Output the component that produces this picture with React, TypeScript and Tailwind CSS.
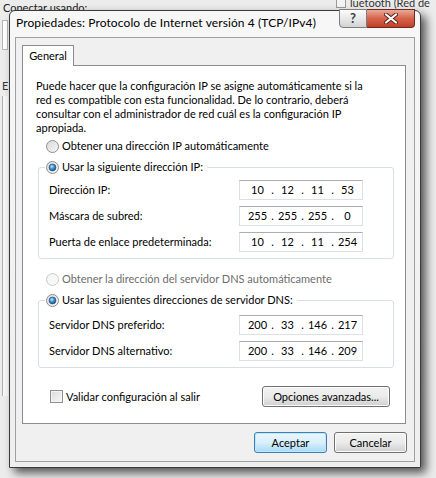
import React, { useId } from 'react';

const Radio = ({ checked, disabled }: { checked?: boolean; disabled?: boolean }) => {
  const id = useId().replace(/:/g, '');
  return (
    <svg width="13" height="13" viewBox="0 0 13 13" className="shrink-0">
      <defs>
        <linearGradient id={`bg${id}`} x1="0" y1="0" x2="1" y2="1">
          <stop offset="0" stopColor={disabled ? '#f4f4f4' : '#d9d9d9'} />
          <stop offset="1" stopColor={disabled ? '#fafafa' : '#f7f7f7'} />
        </linearGradient>
        <radialGradient id={`dot${id}`} cx="0.4" cy="0.35" r="0.7">
          <stop offset="0" stopColor="#bfe6fb" />
          <stop offset="0.5" stopColor="#3c8fd0" />
          <stop offset="1" stopColor="#16508a" />
        </radialGradient>
      </defs>
      <circle cx="6.5" cy="6.5" r="6" fill={`url(#bg${id})`} stroke={disabled ? '#c9c9c9' : '#8c8f93'} />
      {checked && <circle cx="6.5" cy="6.5" r="3.4" fill={`url(#dot${id})`} stroke="#1f4f7e" strokeWidth="0.7" />}
    </svg>
  );
};

const IpBox = ({ parts }: { parts: string[] }) => (
  <div className="flex h-[20px] w-[124px] items-center border border-[#dbdfe6] border-t-[#abadb3] bg-white pl-[5px] leading-[14px]">
    {parts.map((p, i) => (
      <React.Fragment key={i}>
        {i > 0 && <span className="w-[5px] text-center">.</span>}
        <span className="w-[25px] text-center">{p}</span>
      </React.Fragment>
    ))}
  </div>
);

const Row = ({ label, parts }: { label: string; parts: string[] }) => (
  <div className="flex items-center">
    <span className="w-[190px] leading-[14px]">{label}</span>
    <IpBox parts={parts} />
  </div>
);

const WinButton = ({ children, isDefault, className = '' }: { children: React.ReactNode; isDefault?: boolean; className?: string }) => (
  <button
    className={`flex h-[21px] items-center justify-center rounded-[3px] border leading-[14px] ${
      isDefault
        ? 'border-[#3c7fb1] bg-gradient-to-b from-[#eaf6fd] via-[#d9f0fc] to-[#a7d9f5] shadow-[inset_0_0_0_1px_#c0e6fa]'
        : 'border-[#707070] bg-gradient-to-b from-[#f2f2f2] via-[#ebebeb] to-[#cfcfcf] shadow-[inset_0_0_0_1px_#fcfcfc]'
    } ${className}`}
  >
    {children}
  </button>
);

export default function App() {
  return (
    <div className="relative h-[478px] w-[436px] overflow-hidden bg-[#ececec] font-[family-name:Lato,sans-serif] text-[11px] text-black">
      {/* windows behind */}
      <div className="absolute left-[3px] top-[2px] leading-none text-[#222]">Conectar usando:</div>
      <div className="absolute left-[2px] top-[20px] h-[30px] w-[6px] border border-[#b5b5b5] bg-white" />
      <div className="absolute left-[2px] top-[80px] leading-none text-[#333]">E</div>
      <div className="absolute left-[2px] top-[96px] h-[300px] w-[6px] border-l border-[#b0b0b0] bg-[#f7f7f7]" />
      <div className="absolute left-[336px] top-[-2px] h-[10px] w-[10px] border border-[#9a9a9a] bg-[#f4f4f4]" />
      <div className="absolute left-[350px] top-[-3px] whitespace-nowrap leading-none text-[#333]">luetooth (Red de</div>

      {/* dialog */}
      <div className="absolute left-[9px] top-[10px] w-[412px] rounded-t-[6px] border border-[#3a3a3a] bg-gradient-to-b from-[#f7f7f7] to-[#eeeeee] shadow-[5px_5px_10px_rgba(0,0,0,0.65)]">
        <div className="flex h-[26px] items-start justify-between">
          <div className="pl-[6px] pt-[5px] text-[12px] leading-[14px] tracking-[0.1px]">Propiedades: Protocolo de Internet versión 4 (TCP/IPv4)</div>
          <div className="-mt-[2px] mr-[5px] flex">
            <div className="flex h-[19px] w-[28px] items-center justify-center rounded-bl-[4px] border border-[#7d7d7d] bg-gradient-to-b from-[#fbfbfb] via-[#e9e9e9] to-[#d2d2d2] text-[13px] font-bold leading-none text-[#3b3b3b]">
              ?
            </div>
            <div className="flex h-[19px] w-[48px] items-center justify-center rounded-br-[4px] border border-l-0 border-[#6b2a20] bg-gradient-to-b from-[#e9a99a] via-[#d4634a] to-[#c33f25]">
              <svg width="14" height="11" viewBox="0 0 14 11">
                <path d="M2 1.5 L12 9.5 M12 1.5 L2 9.5" stroke="#5a2017" strokeWidth="4" strokeLinecap="round" />
                <path d="M2 1.5 L12 9.5 M12 1.5 L2 9.5" stroke="#ffffff" strokeWidth="2.2" strokeLinecap="round" />
              </svg>
            </div>
          </div>
        </div>

        <div className="px-[5px] pb-[5px]">
          <div className="border border-[#a0a0a0] bg-[#f0f0f0] pb-[8px] pt-[7px]">
            <div className="ml-[6px] mr-[8px]">
              <div className="relative z-10 -mb-[1px] flex h-[21px] w-[52px] items-center justify-center border border-b-0 border-[#898c95] bg-white leading-[14px]">
                General
              </div>
              <div className="h-[359px] border border-[#898c95] bg-white">
                <p className="whitespace-nowrap pl-[13px] pt-[13px] leading-[14px]">
                  Puede hacer que la configuración IP se asigne automáticamente si la
                  <br />
                  red es compatible con esta funcionalidad. De lo contrario, deberá
                  <br />
                  consultar con el administrador de red cuál es la configuración IP
                  <br />
                  apropiada.
                </p>

                <div className="ml-[23px] mt-[4px] flex h-[14px] items-center gap-[3px] leading-[14px]">
                  <Radio />
                  <span>Obtener una dirección IP automáticamente</span>
                </div>

                <fieldset className="ml-[15px] mr-[11px] mt-[7px] rounded-[3px] border border-[#d5dfe5]">
                  <legend className="ml-[6px] flex h-[14px] items-center gap-[3px] bg-white pl-[1px] pr-[4px] leading-[14px]">
                    <Radio checked />
                    <span>Usar la siguiente dirección IP:</span>
                  </legend>
                  <div className="flex flex-col gap-[6px] pb-[6px] pl-[10px] pt-[6px]">
                    <Row label="Dirección IP:" parts={['10', '12', '11', '53']} />
                    <Row label="Máscara de subred:" parts={['255', '255', '255', '0']} />
                    <Row label="Puerta de enlace predeterminada:" parts={['10', '12', '11', '254']} />
                  </div>
                </fieldset>

                <div className="ml-[23px] mt-[13px] flex h-[14px] items-center gap-[3px] leading-[14px] text-[#6d6d6d]">
                  <Radio disabled />
                  <span>Obtener la dirección del servidor DNS automáticamente</span>
                </div>

                <fieldset className="ml-[15px] mr-[11px] mt-[7px] rounded-[3px] border border-[#d5dfe5]">
                  <legend className="ml-[6px] flex h-[14px] items-center gap-[3px] bg-white pl-[1px] pr-[4px] leading-[14px]">
                    <Radio checked />
                    <span>Usar las siguientes direcciones de servidor DNS:</span>
                  </legend>
                  <div className="flex flex-col gap-[6px] pb-[6px] pl-[10px] pt-[8px]">
                    <Row label="Servidor DNS preferido:" parts={['200', '33', '146', '217']} />
                    <Row label="Servidor DNS alternativo:" parts={['200', '33', '146', '209']} />
                  </div>
                </fieldset>

                <div className="ml-[27px] mr-[15px] mt-[18px] flex items-center justify-between">
                  <div className="flex items-center gap-[3px] leading-[14px]">
                    <div className="h-[13px] w-[13px] border border-[#8e8f8f] bg-gradient-to-br from-[#dcdcdc] to-[#f8f8f8] shadow-[inset_0_0_0_1px_#f4f4f4]" />
                    <span>Validar configuración al salir</span>
                  </div>
                  <WinButton className="w-[128px]">Opciones avanzadas...</WinButton>
                </div>
              </div>
            </div>

            <div className="mr-[7px] mt-[8px] flex justify-end gap-[7px]">
              <WinButton isDefault className="w-[73px]">Aceptar</WinButton>
              <WinButton className="w-[73px]">Cancelar</WinButton>
            </div>
          </div>
        </div>
      </div>
    </div>
  );
}
